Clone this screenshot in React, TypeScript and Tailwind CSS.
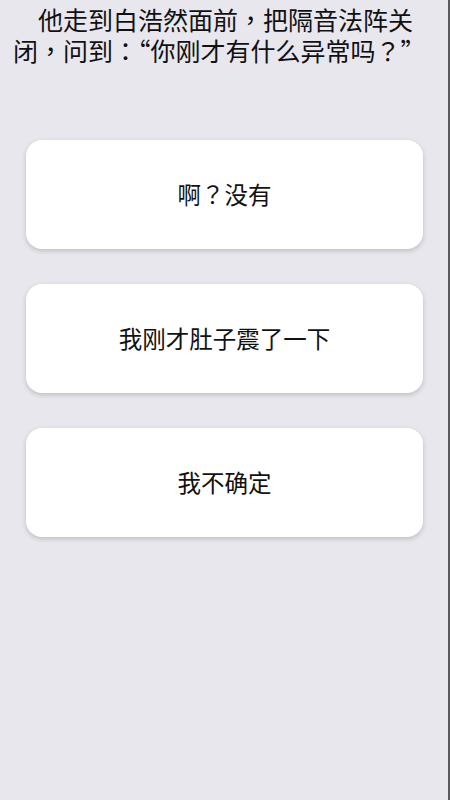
import React from 'react'

const options = ['啊？没有', '我刚才肚子震了一下', '我不确定']

export default function App() {
  return (
    <div
      className="flex h-[800px] w-[450px] overflow-hidden bg-[#e8e7ee] text-[#111]"
      style={{ fontFamily: '"Noto Sans CJK TC", "Noto Sans CJK SC", sans-serif' }}
    >
      <div className="flex-1">
        <p className="px-[13px] pt-[4px] indent-[25px] text-[25px] leading-[31px]">
          他走到白浩然面前，把隔音法阵关闭，问到：“你刚才有什么异常吗？”
        </p>
        <div className="mt-[74px] flex flex-col gap-[35px] pl-[26px] pr-[25px]">
          {options.map(o => (
            <button
              key={o}
              className="flex h-[109px] items-center justify-center rounded-[16px] bg-white text-[23.5px] shadow-[0_2px_5px_rgba(0,0,0,0.18)]"
            >
              {o}
            </button>
          ))}
        </div>
      </div>
      <div className="w-[2px] bg-[#5a5a5e]" />
    </div>
  )
}
